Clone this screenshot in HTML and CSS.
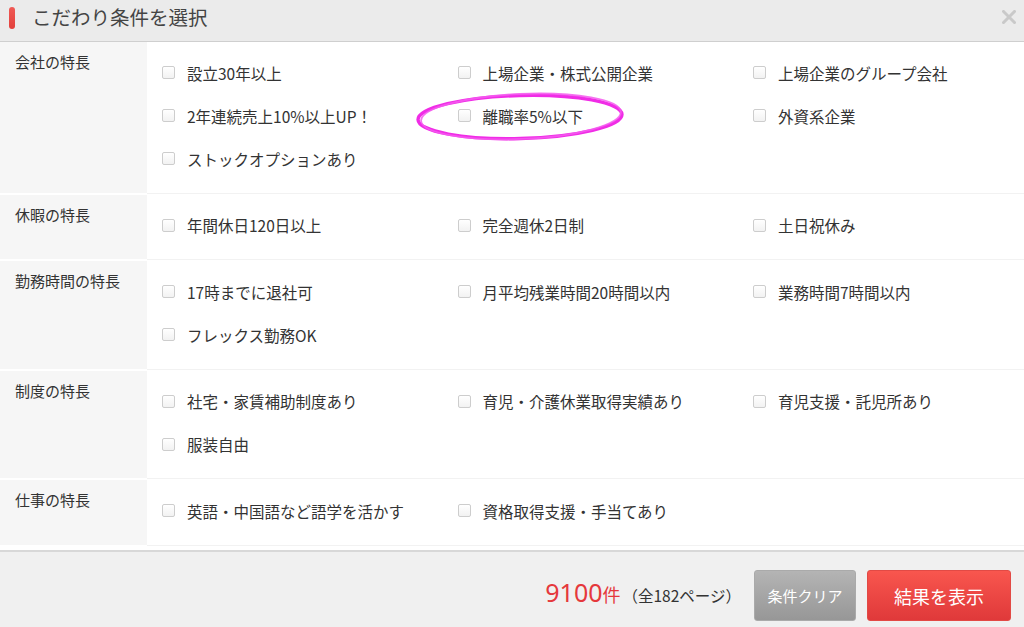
FILE: index.html
```html
<!DOCTYPE html>
<html lang="ja">
<head>
<meta charset="utf-8">
<title>こだわり条件を選択</title>
<link rel="stylesheet" href="styles.css">
</head>
<body>
<div class="modal">
  <header class="modal-head">
    <span class="head-bar"></span>
    <h1 class="head-title">こだわり条件を選択</h1>
    <svg class="close" width="14" height="14" viewBox="0 0 14 14"><path d="M1.5 1.5 L12.5 12.5 M12.5 1.5 L1.5 12.5" stroke="#c9c9c9" stroke-width="3" stroke-linecap="square"/></svg>
  </header>
  <main class="modal-body">
    <section class="row">
      <div class="label">会社の特長</div>
      <div class="items">
        <label class="item"><span class="box"></span>設立30年以上</label>
        <label class="item"><span class="box"></span>上場企業・株式公開企業</label>
        <label class="item"><span class="box"></span>上場企業のグループ会社</label>
        <label class="item"><span class="box"></span>2年連続売上10%以上UP！</label>
        <label class="item"><span class="box"></span>離職率5%以下</label>
        <label class="item"><span class="box"></span>外資系企業</label>
        <label class="item"><span class="box"></span>ストックオプションあり</label>
      </div>
    </section>
    <section class="row">
      <div class="label">休暇の特長</div>
      <div class="items">
        <label class="item"><span class="box"></span>年間休日120日以上</label>
        <label class="item"><span class="box"></span>完全週休2日制</label>
        <label class="item"><span class="box"></span>土日祝休み</label>
      </div>
    </section>
    <section class="row">
      <div class="label">勤務時間の特長</div>
      <div class="items">
        <label class="item"><span class="box"></span>17時までに退社可</label>
        <label class="item"><span class="box"></span>月平均残業時間20時間以内</label>
        <label class="item"><span class="box"></span>業務時間7時間以内</label>
        <label class="item"><span class="box"></span>フレックス勤務OK</label>
      </div>
    </section>
    <section class="row">
      <div class="label">制度の特長</div>
      <div class="items">
        <label class="item"><span class="box"></span>社宅・家賃補助制度あり</label>
        <label class="item"><span class="box"></span>育児・介護休業取得実績あり</label>
        <label class="item"><span class="box"></span>育児支援・託児所あり</label>
        <label class="item"><span class="box"></span>服装自由</label>
      </div>
    </section>
    <section class="row">
      <div class="label">仕事の特長</div>
      <div class="items">
        <label class="item"><span class="box"></span>英語・中国語など語学を活かす</label>
        <label class="item"><span class="box"></span>資格取得支援・手当てあり</label>
      </div>
    </section>
  </main>
  <footer class="modal-foot">
    <div class="count"><span class="num">9100</span><span class="unit">件</span><span class="pages">（全182ページ）</span></div>
    <button class="btn btn-clear">条件クリア</button>
    <button class="btn btn-show">結果を表示</button>
  </footer>
  <svg class="mark" width="220" height="56" viewBox="0 0 220 56">
    <ellipse cx="110" cy="28" rx="102" ry="21.5" fill="none" stroke="#f02ce6" stroke-width="3.4" transform="rotate(-1.5 110 28)"/>
    <ellipse cx="111" cy="27.5" rx="100" ry="22.5" fill="none" stroke="#f55bef" stroke-width="1.8" opacity="0.85" transform="rotate(-2.5 110 28)"/>
  </svg>
</div>
</body>
</html>
```

FILE: styles.css
```css
* { box-sizing: border-box; }
html, body { margin: 0; padding: 0; }
body {
  width: 1024px;
  height: 627px;
  overflow: hidden;
  font-family: "Noto Sans CJK JP", "Noto Sans", sans-serif;
  color: #333;
  background: #fff;
}
.modal {
  position: relative;
  height: 627px;
  display: flex;
  flex-direction: column;
}
.modal-head {
  height: 42px;
  flex: none;
  background: #ebebeb;
  border-bottom: 1px solid #cfcfcf;
  display: flex;
  align-items: center;
  padding: 0 8px 0 9px;
}
.head-bar {
  width: 6px;
  height: 22px;
  border-radius: 3px;
  background: linear-gradient(#f05a55, #e2403c);
  margin-top: -5px;
}
.head-title {
  margin: -7px 0 0 17px;
  font-size: 19.5px;
  font-weight: normal;
  color: #444;
  line-height: 1;
  flex: 1;
}
.close { margin-top: -7px; }
.modal-body {
  flex: 1;
  overflow: hidden;
}
.row {
  display: grid;
  grid-template-columns: 147px 1fr;
  border-bottom: 2px solid #fff;
}
.label {
  background: #f6f6f6;
  font-size: 15px;
  line-height: 20px;
  padding: 10px 0 0 15px;
  color: #333;
}
.items {
  display: grid;
  grid-template-columns: repeat(3, 295.5px);
  padding: 9px 0 12.5px 15px;
  box-shadow: 0 1px 0 #f2f2f2;
  overflow: hidden;
}
.item {
  height: 43px;
  display: flex;
  align-items: center;
  font-size: 15.5px;
  color: #333;
  white-space: nowrap;
}
.box {
  width: 13px;
  height: 13px;
  border: 1px solid #cdcdcd;
  border-radius: 2px;
  background: linear-gradient(#fff, #f2f2f2);
  margin-right: 12px;
  flex: none;
}
.modal-foot {
  height: 77px;
  flex: none;
  background: #f0f0f0;
  border-top: 2px solid #d8d8d8;
  display: flex;
  align-items: flex-start;
  justify-content: flex-end;
  padding: 18px 13px 0 0;
}
.count {
  display: flex;
  align-items: baseline;
  margin-right: 13px;
  height: 51px;
  padding-top: 10px;
}
.num { font-size: 25px; color: #e5383c; line-height: 1; font-family: "Noto Sans", sans-serif; }
.unit { font-size: 18px; color: #e5383c; }
.pages { font-size: 15.5px; color: #333; margin-left: 2px; }
.btn {
  height: 51px;
  border-radius: 3px;
  font-family: "Noto Sans CJK JP", sans-serif;
  color: #fff;
  cursor: pointer;
}
.btn-clear {
  width: 102px;
  font-size: 15px;
  background: linear-gradient(#b4b4b4, #979797);
  border: 1px solid #aaa;
  margin-right: 11px;
}
.btn-show {
  width: 144px;
  font-size: 18px;
  background: linear-gradient(#f8564e, #e0393a);
  border: 1px solid #e24a45;
}
.mark {
  position: absolute;
  left: 410px;
  top: 89px;
  pointer-events: none;
}
```
